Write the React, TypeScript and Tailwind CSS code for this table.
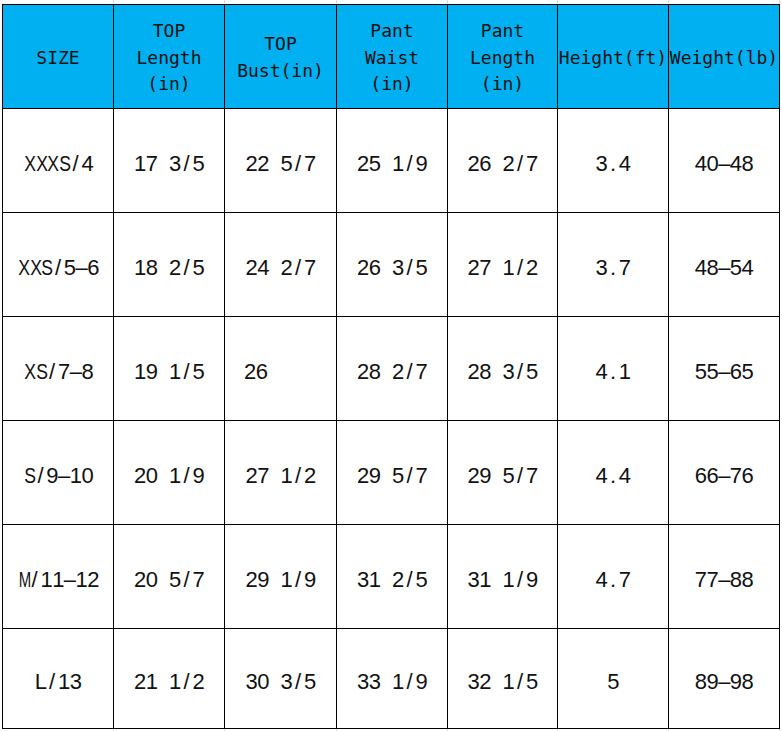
const headers: string[][] = [
  ["SIZE"],
  ["TOP", "Length", "(in)"],
  ["TOP", "Bust(in)"],
  ["Pant", "Waist", "(in)"],
  ["Pant", "Length", "(in)"],
  ["Height(ft)"],
  ["Weight(lb)"],
];

const rows: string[][] = [
  ["XXXS/4", "17 3/5", "22 5/7", "25 1/9", "26 2/7", "3.4", "40–48"],
  ["XXS/5–6", "18 2/5", "24 2/7", "26 3/5", "27 1/2", "3.7", "48–54"],
  ["XS/7–8", "19 1/5", "26", "28 2/7", "28 3/5", "4.1", "55–65"],
  ["S/9–10", "20 1/9", "27 1/2", "29 5/7", "29 5/7", "4.4", "66–76"],
  ["M/11–12", "20 5/7", "29 1/9", "31 2/5", "31 1/9", "4.7", "77–88"],
  ["L/13", "21 1/2", "30 3/5", "33 1/9", "32 1/5", "5", "89–98"],
];

const cols = "grid grid-cols-[111px_111px_112px_111px_110px_111px_111px]";

// narrow the wide capitals so they fit a half-width cell
function squeeze(ch: string) {
  if (ch === "M") return "scale-x-[0.68]";
  if (ch === "X" || ch === "S") return "scale-x-[0.8]";
  return "";
}

// half-width cells, like the sheet's CJK font renders latin text
function Mono({ text }: { text: string }) {
  return (
    <span className="flex">
      {text.split("").map((ch, i) => (
        <span key={i} className={`inline-block w-[11.7px] text-center ${squeeze(ch)}`}>
          {ch === " " ? "\u00a0" : ch}
        </span>
      ))}
    </span>
  );
}

export default function App() {
  return (
    <div className="w-[782px] h-[731px] bg-white overflow-hidden">
      <div className="ml-[2px] w-[778px]">
        {/* faint sheet gridlines above the table */}
        <div className={`${cols} h-[4px] pl-[1px]`}>
          {headers.map((_, i) => (
            <div key={i} className="border-r border-[#d9d9d9]" />
          ))}
        </div>
        <div className="border-l border-t border-black">
          <div className={`${cols} h-[104px] bg-[#00b0f0]`}>
            {headers.map((lines, i) => (
              <div
                key={i}
                className="border-r border-b border-black flex flex-col items-center justify-center pt-[3px] font-['DejaVu_Sans_Mono','Noto_Sans_CJK_SC',monospace] text-[18px] leading-[26.7px] text-[#111] whitespace-nowrap"
              >
                {lines.map((l, j) => (
                  <span key={j}>{l}</span>
                ))}
              </div>
            ))}
          </div>
          {rows.map((row, r) => (
            <div key={r} className={`${cols} ${r === rows.length - 1 ? "h-[100px]" : "h-[104px]"}`}>
              {row.map((cell, c) => (
                <div
                  key={c}
                  className={`border-r border-b border-black flex items-center pt-[5px] font-['Liberation_Sans',Arial,sans-serif] text-[22px] text-[#111] ${
                    cell === "26" ? "justify-start pl-[19px]" : "justify-center"
                  }`}
                >
                  <Mono text={cell} />
                </div>
              ))}
            </div>
          ))}
        </div>
        <div className={`${cols} h-[3px] pl-[1px]`}>
          {headers.map((_, i) => (
            <div key={i} className="border-r border-[#d9d9d9]" />
          ))}
        </div>
      </div>
    </div>
  );
}
